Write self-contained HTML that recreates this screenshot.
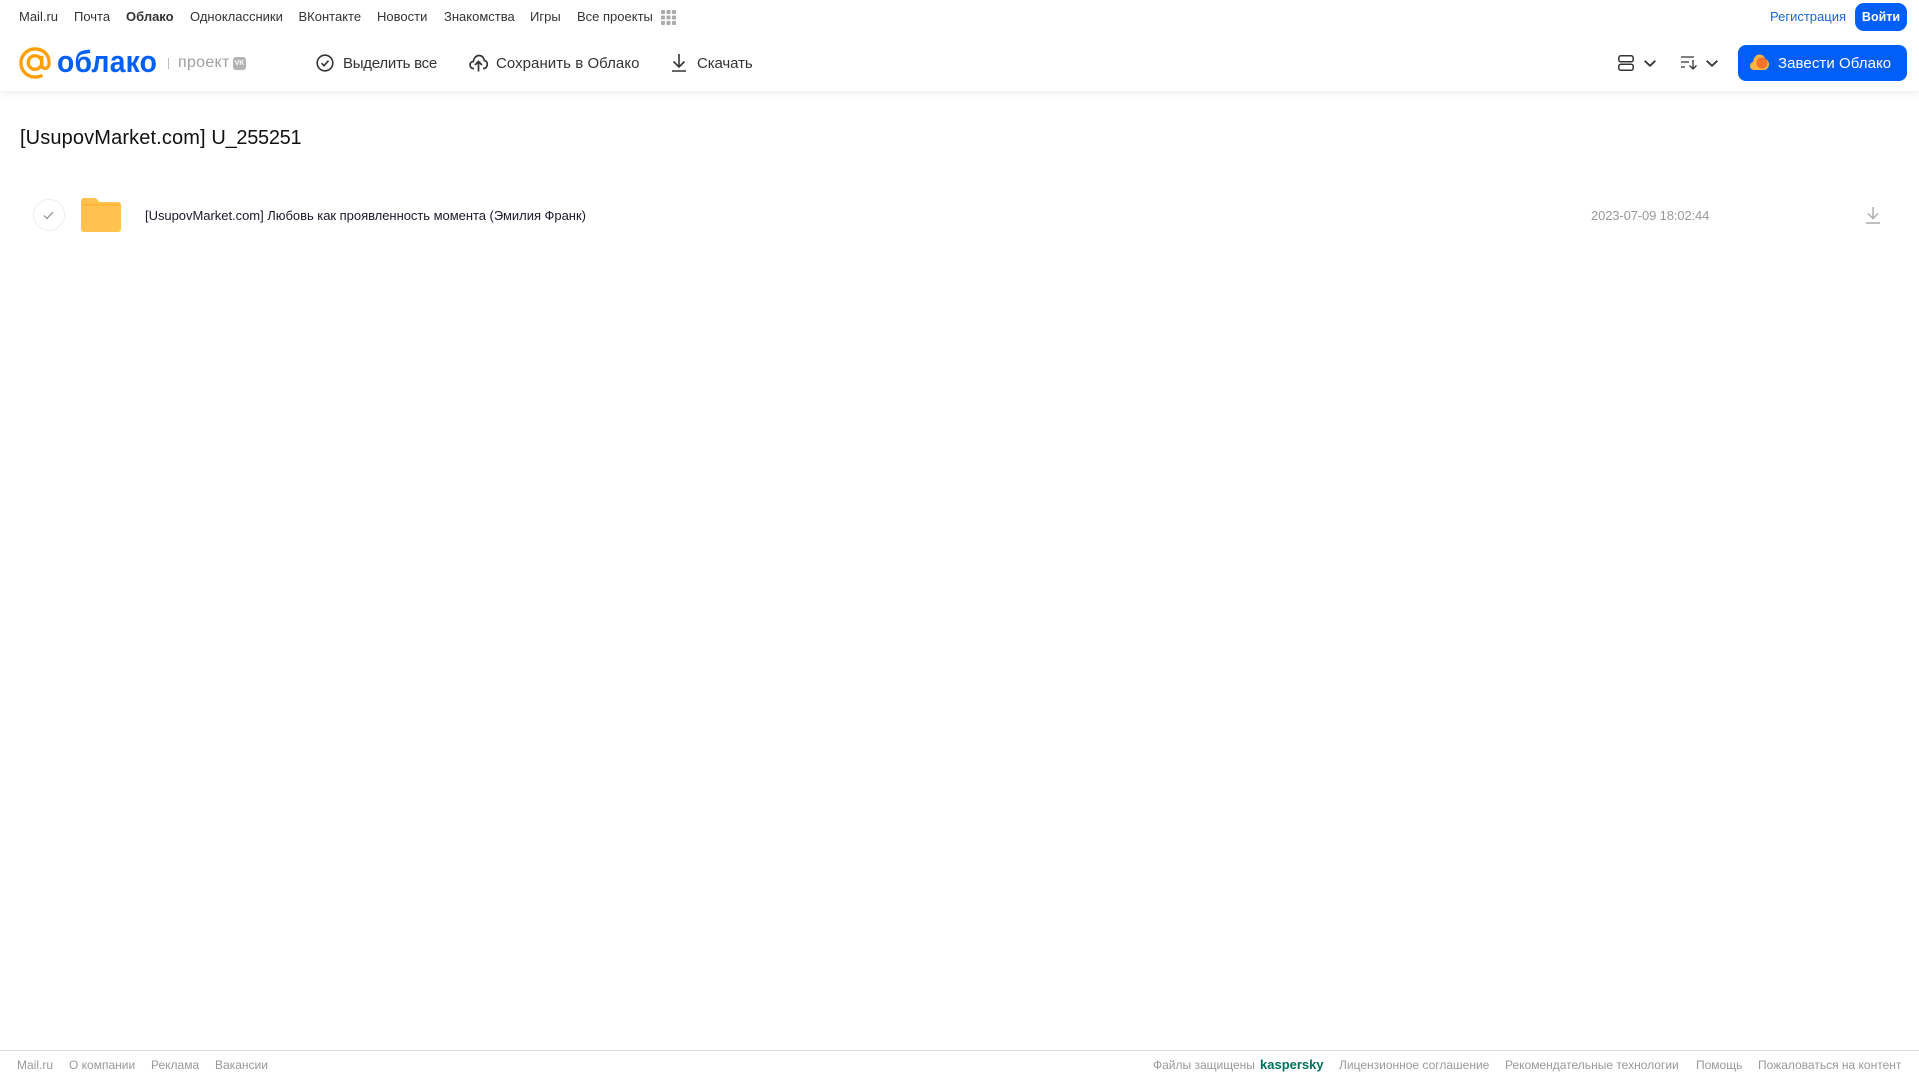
<!DOCTYPE html>
<html lang="ru"><head><meta charset="utf-8"><title>Облако</title>
<style>
html,body{margin:0;padding:0;width:1919px;height:1079px;overflow:hidden;background:#fff}
body{font-family:"Liberation Sans",sans-serif;position:relative}
.t{position:absolute;white-space:nowrap;line-height:20px;height:20px;transform-origin:0 50%}
.n{font-size:13px;top:7px;color:#333}
.a{font-size:15px;top:53.500px;color:#333}
.f{font-size:12px;top:1055px;color:#999}
svg{position:absolute;overflow:visible}
</style></head><body>
<div style="position:absolute;left:0;top:0;width:1919px;height:91px;background:#fff;box-shadow:0 2px 8px rgba(0,0,0,.08)"></div>

<span class="t n" style="left:19px">Mail.ru</span>
<span class="t n" style="left:74px">Почта</span>
<span class="t n" style="left:126px;font-weight:bold">Облако</span>
<span class="t n" style="left:190px">Одноклассники</span>
<span class="t n" style="left:298.500px">ВКонтакте</span>
<span class="t n" style="left:377px">Новости</span>
<span class="t n" style="left:444px">Знакомства</span>
<span class="t n" style="left:530px">Игры</span>
<span class="t n" style="left:577px">Все проекты</span>
<svg style="left:661px;top:10px" width="15" height="15" fill="#aaa"><rect x="0" y="0" width="4" height="4" rx="1"/><rect x="5.500" y="0" width="4" height="4" rx="1"/><rect x="11" y="0" width="4" height="4" rx="1"/><rect x="0" y="5.500" width="4" height="4" rx="1"/><rect x="5.500" y="5.500" width="4" height="4" rx="1"/><rect x="11" y="5.500" width="4" height="4" rx="1"/><rect x="0" y="11" width="4" height="4" rx="1"/><rect x="5.500" y="11" width="4" height="4" rx="1"/><rect x="11" y="11" width="4" height="4" rx="1"/></svg>

<span class="t n" style="left:1770px;color:#1a66d6">Регистрация</span>
<div style="position:absolute;left:1855px;top:3px;width:52px;height:28px;border-radius:9px;background:#005ff9;color:#fff;font-size:12.500px;font-weight:bold;line-height:28px;text-align:center">Войти</div>

<svg style="left:19px;top:47px" width="32" height="32" viewBox="0 0 33 33" fill="none" stroke="#ff9e00" stroke-width="3.400"><circle cx="16.500" cy="16" r="7"/><path d="M23.500 9v9.500c0 5 7.500 5 7.500-1.500v-1C31 7.500 24.500 2 16.500 2S2 8.500 2 16.500 8.500 31 16.500 31c3 0 5.500-.7 7.500-2"/></svg>
<span class="t" style="left:57px;top:46px;height:32px;line-height:32px;font-size:31px;font-weight:bold;color:#005ff9;letter-spacing:.3px;transform:scaleX(.91);transform-origin:0 50%">облако</span>
<div style="position:absolute;left:168px;top:58px;width:1px;height:11px;background:#bbb"></div>
<span class="t" style="left:178px;top:53px;font-size:16px;color:#a0a0a0;letter-spacing:.3px">проект</span>
<div style="position:absolute;left:233px;top:57px;width:13px;height:13px;border-radius:3px;background:#b3b3b3;color:#fff;font-size:7px;font-weight:bold;line-height:13px;text-align:center">VK</div>

<svg style="left:316px;top:54px" width="18" height="18" viewBox="0 0 18 18" fill="none" stroke="#333" stroke-width="1.600"><circle cx="9" cy="9" r="7.800"/><path d="M5.500 9.200l2.500 2.500 4.500-5"/></svg>
<span class="t a" style="left:343px;letter-spacing:-.25px">Выделить все</span>
<svg style="left:469px;top:54px" width="19" height="18" viewBox="0 0 19 18" fill="none" stroke="#333" stroke-width="1.700"><path d="M5 14.500H4.500C2.500 14.500 1 13 1 11s1.500-3.300 3.300-3.500C4.800 4 7 1.500 10 1.500c3 0 5 2.300 5.300 5 2 .2 3 2 3 3.800 0 2-1.300 4.200-3.500 4.200H14"/><path d="M9.500 17.500V8M6 11l3.500-3.500L13 11"/></svg>
<span class="t a" style="left:496px;letter-spacing:.05px">Сохранить в Облако</span>
<svg style="left:672px;top:54px" width="14" height="18" viewBox="0 0 14 18" fill="none" stroke="#333" stroke-width="1.600"><path d="M7 0v12.500M1.500 7.500L7 13l5.500-5.500M0 17h14"/></svg>
<span class="t a" style="left:697px;letter-spacing:-.1px">Скачать</span>

<svg style="left:1618px;top:55px" width="16" height="16" viewBox="0 0 16 16" fill="none" stroke="#333" stroke-width="1.500"><rect x=".8" y=".8" width="14.400" height="6" rx="2"/><rect x=".8" y="9.200" width="14.400" height="6" rx="2"/></svg>
<svg style="left:1644px;top:60px" width="12" height="7" viewBox="0 0 12 7" fill="none" stroke="#333" stroke-width="1.800"><path d="M.7.8L6 5.800 11.300.8"/></svg>
<svg style="left:1681px;top:56px" width="16" height="14" viewBox="0 0 16 14" fill="none" stroke="#333" stroke-width="1.300"><path d="M0 1h13M0 6h8M0 11h4M12 4v9M8.500 9.500L12 13l3.500-3.500"/></svg>
<svg style="left:1706px;top:60px" width="12" height="7" viewBox="0 0 12 7" fill="none" stroke="#333" stroke-width="1.800"><path d="M.7.8L6 5.800 11.300.8"/></svg>

<div style="position:absolute;left:1738px;top:45px;width:169px;height:36px;border-radius:8px;background:#005ff9"></div>
<svg style="left:1750px;top:54px" width="19" height="17" viewBox="0 0 19 17"><path d="M4 16C1.500 16 0 14 0 12c0-2 1.300-3.500 3-4C3.500 4 6 .5 9.500.5c3 0 5 2 5.700 4.500 2.200.5 3.800 2.800 3.800 5.300 0 3-2.200 5.700-5 5.700z" fill="#ffb340"/><circle cx="12" cy="9" r="5.500" fill="#f5732a"/></svg>
<span class="t a" style="left:1778px;color:#fff;letter-spacing:.07px">Завести Облако</span>

<span class="t" style="left:20px;top:126px;height:24px;line-height:24px;font-size:20px;color:#111;letter-spacing:.13px">[UsupovMarket.com] <span style="letter-spacing:-.3px">U_255251</span></span>

<div style="position:absolute;left:33px;top:199px;width:30px;height:30px;border:1px solid #eee;border-radius:50%"></div>
<svg style="left:43px;top:211px" width="11" height="9" viewBox="0 0 11 9" fill="none" stroke="#999" stroke-width="1.300"><path d="M1 4.500L4 7.500 10 1"/></svg>
<svg style="left:81px;top:198px" width="40" height="34" viewBox="0 0 40 34"><path d="M0 3C0 1.300 1.300 0 3 0h10c2 0 3 1 4 2.500L18.500 4H37c1.700 0 3 1.300 3 3v24c0 1.700-1.300 3-3 3H3c-1.700 0-3-1.300-3-3z" fill="#ffc24f"/><path d="M0 8h40v-.5L37 6H3L0 7.500z" fill="#ffb638"/></svg>
<span class="t" style="left:145px;top:206px;font-size:13px;color:#1a1a2a;letter-spacing:-.03px">[UsupovMarket.com] Любовь как проявленность момента (Эмилия Франк)</span>
<span class="t" style="left:1591px;top:206px;font-size:13px;color:#999;letter-spacing:-.13px">2023-07-09 18:02:44</span>
<svg style="left:1866px;top:207px" width="14" height="17" viewBox="0 0 14 17" fill="none" stroke="#aaa" stroke-width="1.400"><path d="M7 0v11.500M2 6.500L7 11.500 12 6.500M0 16h14"/></svg>

<div style="position:absolute;left:0;top:1050px;width:1919px;height:1px;background:#dcdcdc"></div>
<span class="t f" style="left:17px">Mail.ru</span>
<span class="t f" style="left:69px">О компании</span>
<span class="t f" style="left:151px">Реклама</span>
<span class="t f" style="left:215px">Вакансии</span>
<span class="t f" style="left:1153px">Файлы защищены</span>
<span class="t f" style="left:1260px;font-size:13px;font-weight:bold;color:#00715c">kaspersky</span>
<span class="t f" style="left:1339px">Лицензионное соглашение</span>
<span class="t f" style="left:1505px">Рекомендательные технологии</span>
<span class="t f" style="left:1696px">Помощь</span>
<span class="t f" style="left:1758px">Пожаловаться на контент</span>
</body></html>
